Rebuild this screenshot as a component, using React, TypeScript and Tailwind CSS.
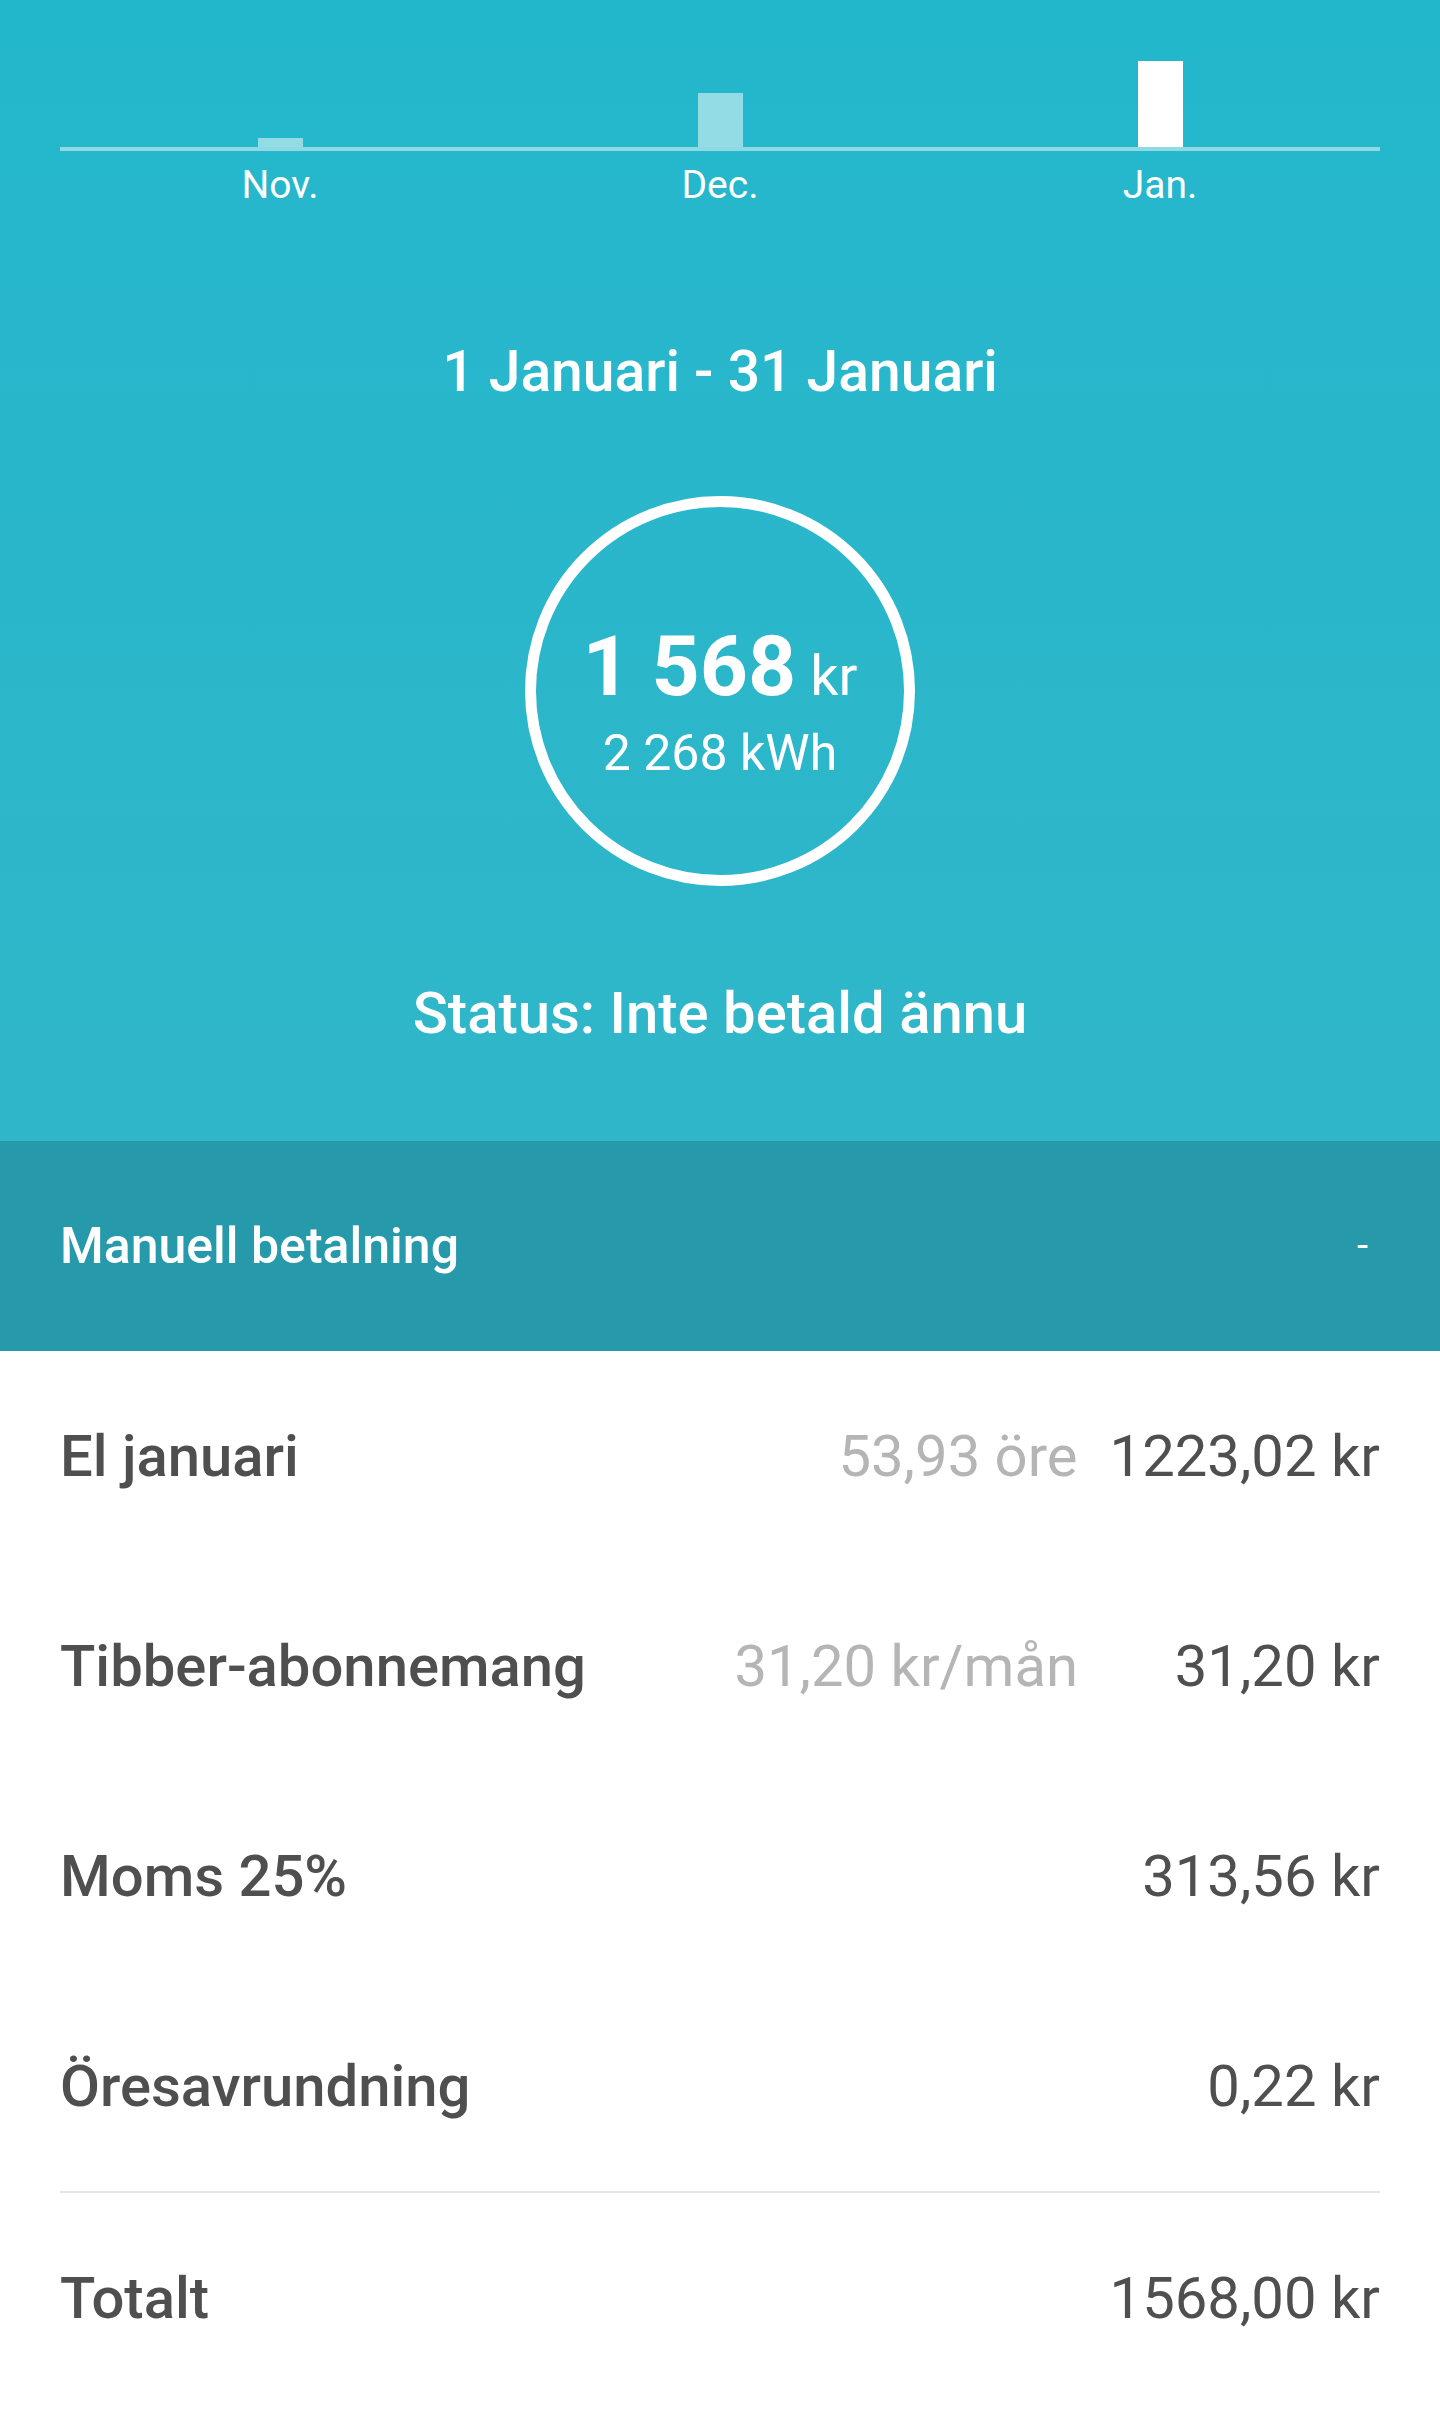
export default function App() {
  const months = [
    { label: "Nov.", height: 9, color: "bg-[#93dce5]" },
    { label: "Dec.", height: 54, color: "bg-[#93dce5]" },
    { label: "Jan.", height: 86, color: "bg-white" },
  ];

  const rows = [
    { label: "El januari", unit: "53,93 öre", value: "1223,02 kr" },
    { label: "Tibber-abonnemang", unit: "31,20 kr/mån", value: "31,20 kr" },
    { label: "Moms 25%", unit: "", value: "313,56 kr" },
    { label: "Öresavrundning", unit: "", value: "0,22 kr" },
  ];

  return (
    <div className="min-h-screen bg-white font-['Roboto','Noto_Sans',sans-serif]">
      {/* Header */}
      <div className="bg-linear-to-b from-[#23b7cc] to-[#30b6c9] pb-[96px] text-white">
        {/* Chart */}
        <div className="px-[60px]">
          <div className="grid h-[147px] grid-cols-3 items-end">
            {months.map((m) => (
              <div key={m.label} className="flex justify-center">
                <div className={`w-[45px] ${m.color}`} style={{ height: m.height }} />
              </div>
            ))}
          </div>
          <div className="h-[4px] bg-[#8fd9e3]" />
          <div className="mt-[14px] grid grid-cols-3 text-center">
            {months.map((m) => (
              <span key={m.label} className="text-[39px] leading-[40px]">
                {m.label}
              </span>
            ))}
          </div>
        </div>

        <h1 className="mt-[135px] text-center text-[57px] font-medium leading-[64px]">
          1 Januari - 31 Januari
        </h1>

        <div className="mx-auto mt-[92px] flex h-[390px] w-[390px] flex-col items-center justify-center rounded-full border-[11px] border-white pt-[20px]">
          <div className="flex items-baseline gap-[14px]">
            <span className="text-[84px] font-bold leading-[84px]">1 568</span>
            <span className="text-[56px] leading-[84px]">kr</span>
          </div>
          <div className="mt-[10px] text-[50px] leading-[50px]">2 268 kWh</div>
        </div>

        <p className="mt-[95px] text-center text-[58px] font-medium leading-[64px]">
          Status: Inte betald ännu
        </p>
      </div>

      {/* Payment method */}
      <div className="flex h-[210px] items-center justify-between bg-[#2699ab] pl-[60px] pr-[72px] text-white">
        <span className="text-[50px] font-medium">Manuell betalning</span>
        <span className="text-[40px]">-</span>
      </div>

      {/* Lines */}
      <div className="px-[60px] text-[#4f4f4f]">
        {rows.map((r) => (
          <div key={r.label} className="flex h-[210px] items-center">
            <span className="flex-1 text-[58px] font-medium">{r.label}</span>
            {r.unit && <span className="mr-[32px] text-[58px] text-[#b5b5b5]">{r.unit}</span>}
            <span className="min-w-[270px] shrink-0 text-right text-[58px]">{r.value}</span>
          </div>
        ))}
        <div className="h-[2px] bg-[#e4e4e4]" />
        <div className="flex h-[210px] items-center">
          <span className="flex-1 text-[58px] font-medium">Totalt</span>
          <span className="text-right text-[58px]">1568,00 kr</span>
        </div>
      </div>
    </div>
  );
}
